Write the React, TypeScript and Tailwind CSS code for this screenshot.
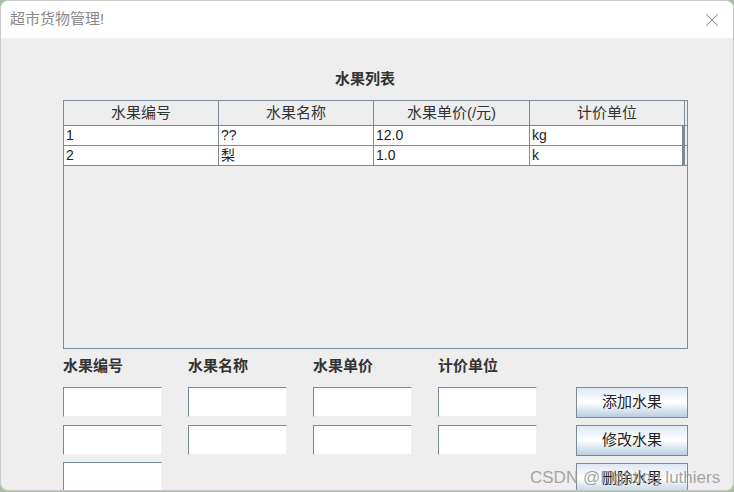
import { X } from "lucide-react";

const cn = '"Liberation Sans", "Noto Sans CJK SC", sans-serif';

const columns = ["水果编号", "水果名称", "水果单价(/元)", "计价单位"];
const rows = [
  ["1", "??", "12.0", "kg"],
  ["2", "梨", "1.0", "k"],
];
const labels = ["水果编号", "水果名称", "水果单价", "计价单位"];

function Field() {
  return <div className="h-[30px] w-[99px] border border-[#7a8a99] border-r-[#eef0f2] border-b-[#eef0f2] bg-white shadow-[inset_0_0_0_1px_#fff]" />;
}

function Btn({ label }: { label: string }) {
  return (
    <button className="flex h-[31px] w-[112px] items-center justify-center border border-[#7a8a99] bg-gradient-to-b from-[#dfe9f4] via-white to-[#b9cee3] text-[15px] text-[#222]">
      {label}
    </button>
  );
}

export default function App() {
  return (
    <div className="h-[492px] w-[734px] bg-[#a6bfa6]" style={{ fontFamily: cn }}>
      <div className="relative flex h-[491px] w-[734px] flex-col overflow-hidden rounded-[8px] border border-[#c9c9c9] bg-[#eeeeee]">
        {/* Title bar */}
        <div className="flex h-[37px] shrink-0 items-center justify-between bg-white pl-[9px] pr-[10px]">
          <span className="text-[15px] text-[#8a8a8a]">超市货物管理!</span>
          <X className="h-[22px] w-[22px] text-[#8a8a8a]" strokeWidth={1.1} />
        </div>

        {/* Body */}
        <div className="flex flex-col pl-[62px]">
          <div className="mt-[30px] w-[604px] text-center text-[15px] font-bold leading-[22px] text-[#333]">水果列表</div>

          {/* Table */}
          <div className="mt-[10px] h-[249px] w-[625px] border border-[#7a8a99] bg-[#eeeeee]">
            <div className="flex h-[25px] border-b border-[#7a8a99]">
              {columns.map((c, i) => (
                <div
                  key={c}
                  className={`flex h-full items-center justify-center border-r border-[#7a8a99] text-[15px] text-[#333] ${i === 2 ? "w-[156px]" : "w-[155px]"}`}
                >
                  {c}
                </div>
              ))}
            </div>
            {rows.map((r) => (
              <div key={r[0]} className="flex h-[20px] border-b border-[#7a8a99]">
                {r.map((v, i) => (
                  <div
                    key={i}
                    className={`flex h-full items-center border-r border-[#7a8a99] bg-white pl-[2px] text-[14px] text-[#222] ${i === 2 ? "w-[156px]" : "w-[155px]"} ${i === 3 ? "border-r-[3px]" : ""}`}
                  >
                    {v}
                  </div>
                ))}
              </div>
            ))}
          </div>

          {/* Form */}
          <div className="mt-[7px] flex">
            <div className="flex flex-col">
              <div className="flex gap-[26px]">
                {labels.map((l) => (
                  <div key={l} className="w-[99px] text-[15px] font-bold leading-[20px] text-[#333]">
                    {l}
                  </div>
                ))}
              </div>
              <div className="mt-[11px] flex gap-[26px]">
                <Field />
                <Field />
                <Field />
                <Field />
              </div>
              <div className="mt-[8px] flex gap-[26px]">
                <Field />
                <Field />
                <Field />
                <Field />
              </div>
              <div className="mt-[7px] flex">
                <Field />
              </div>
            </div>
            <div className="ml-[39px] mt-[31px] flex flex-col gap-[7px]">
              <Btn label="添加水果" />
              <Btn label="修改水果" />
              <Btn label="删除水果" />
            </div>
          </div>
        </div>

        {/* Watermark */}
        <div className="absolute left-[529px] top-[464px] text-[17px] text-[#9a9a9a]/90">CSDN @Fighting luthiers</div>
      </div>
    </div>
  );
}
